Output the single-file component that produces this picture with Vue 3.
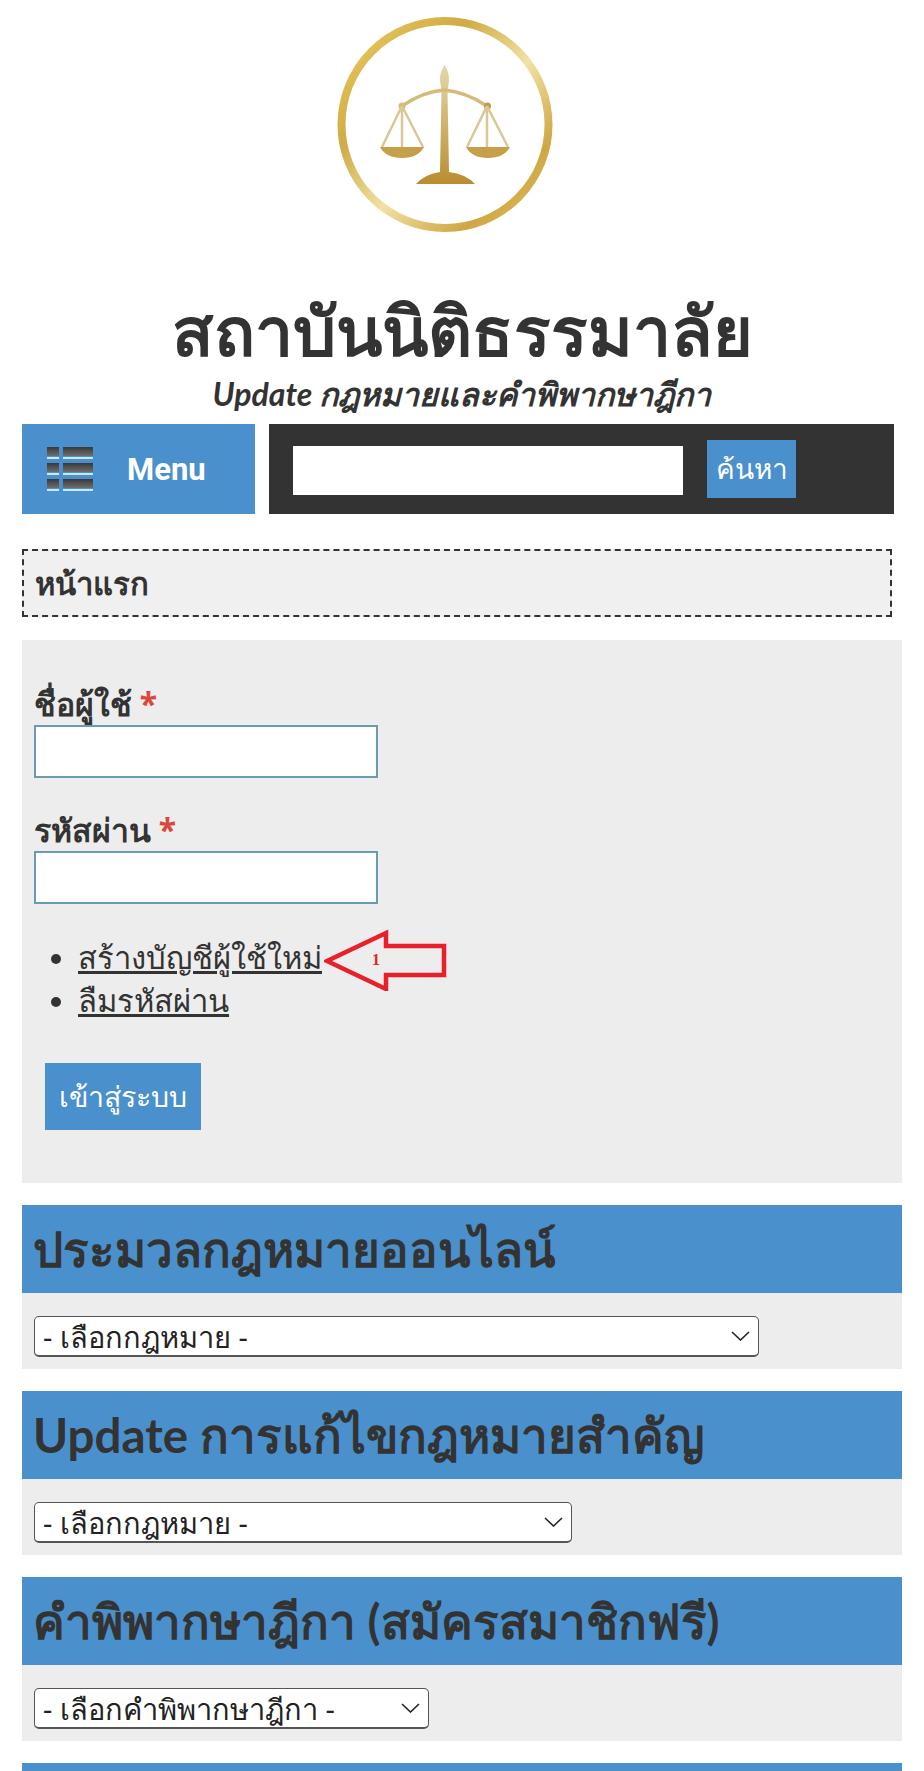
<template>
  <div class="page">
    <header class="site-head">
      <svg class="logo" width="300" height="250" viewBox="0 0 300 250" xmlns="http://www.w3.org/2000/svg">
        <defs>
          <linearGradient id="ring" x1="0" y1="0" x2="1" y2="1">
            <stop offset="0" stop-color="#ecd063" />
            <stop offset="0.3" stop-color="#d0aa45" />
            <stop offset="0.55" stop-color="#f0e2a4" />
            <stop offset="0.8" stop-color="#cfa744" />
            <stop offset="1" stop-color="#e0c263" />
          </linearGradient>
          <linearGradient id="gold" x1="0" y1="0" x2="0" y2="1">
            <stop offset="0" stop-color="#e6d8aa" />
            <stop offset="1" stop-color="#b98d30" />
          </linearGradient>
          <filter id="soft"><feGaussianBlur stdDeviation="0.6" /></filter>
        </defs>
        <g filter="url(#soft)">
          <circle cx="145" cy="124.500" r="103.500" fill="none" stroke="url(#ring)" stroke-width="8" />
          <path d="M144.500 65 Q149 71 149 80 L147.500 92 L149 172 Q166 174 175 184 H116 Q125 174 140 172 L141.500 92 L140 80 Q140 71 144.500 65 Z" fill="url(#gold)" />
          <path d="M102 106 Q122 92 144 90 Q166 92 187 106" fill="none" stroke="#d4bb7a" stroke-width="3.500" />
          <circle cx="102" cy="106" r="3.500" fill="#d4bb7a" />
          <circle cx="187.500" cy="106" r="3.500" fill="#c39d45" />
          <path d="M102 106 L82 147 M102 106 L123 147 M102 106 V147 M187 106 L167 147 M187 106 L208 147 M187 106 V147" fill="none" stroke="#d9c795" stroke-width="2.500" />
          <path d="M80 147 H124 Q118 158 102 158 Q86 158 80 147 Z M166 147 H210 Q204 158 188 158 Q172 158 166 147 Z" fill="#c6a04a" />
        </g>
      </svg>
      <h1 class="site-name">สถาบันนิติธรรมาลัย</h1>
      <p class="slogan">Update กฎหมายและคำพิพากษาฎีกา</p>
    </header>

    <div class="toolbar">
      <div class="menu-btn">
        <svg width="46" height="44" viewBox="0 0 46 44" xmlns="http://www.w3.org/2000/svg">
          <defs>
            <linearGradient id="bar" x1="0" y1="0" x2="0" y2="1">
              <stop offset="0" stop-color="#383838" />
              <stop offset="1" stop-color="#6e6e6e" />
            </linearGradient>
          </defs>
          <g v-for="y in [0, 16, 32]" :key="y">
            <rect x="0" :y="y" width="12" height="9" fill="url(#bar)" />
            <rect x="16" :y="y" width="30" height="9" fill="url(#bar)" />
            <rect x="0" :y="y + 10" width="12" height="2" fill="#cfe6f7" />
            <rect x="16" :y="y + 10" width="30" height="2" fill="#cfe6f7" />
          </g>
        </svg>
        <span class="menu-label">Menu</span>
      </div>
      <div class="search-box">
        <input class="search-input" type="text" />
        <button class="search-btn" type="button">ค้นหา</button>
      </div>
    </div>

    <div class="breadcrumb">หน้าแรก</div>

    <form class="login" @submit.prevent>
      <label class="field">
        <span class="field-label">ชื่อผู้ใช้ <em>*</em></span>
        <input class="field-input" type="text" />
      </label>
      <label class="field">
        <span class="field-label">รหัสผ่าน <em>*</em></span>
        <input class="field-input" type="password" />
      </label>
      <ul class="links">
        <li>
          <a href="#">สร้างบัญชีผู้ใช้ใหม่</a>
          <svg class="arrow" width="126" height="62" viewBox="0 0 126 62" xmlns="http://www.w3.org/2000/svg">
            <path d="M3 32 L62 4 V17 H120 V46 H62 V60 Z" fill="none" stroke="#e8202c" stroke-width="4.500" />
            <text x="48" y="36" class="arrow-num">1</text>
          </svg>
        </li>
        <li><a href="#">ลืมรหัสผ่าน</a></li>
      </ul>
      <button class="submit" type="button">เข้าสู่ระบบ</button>
    </form>

    <section v-for="block in blocks" :key="block.id" class="block">
      <h2 class="block-title">{{ block.title }}</h2>
      <div class="block-body">
        <div class="select-wrap" :style="{ width: block.width + 'px' }">
          <select class="block-select">
            <option>{{ block.option }}</option>
          </select>
          <svg class="chevron" width="19" height="10" viewBox="0 0 19 10" xmlns="http://www.w3.org/2000/svg">
            <path d="M1 1 L9.500 9 L18 1" fill="none" stroke="#222" stroke-width="1.600" />
          </svg>
        </div>
      </div>
    </section>
  </div>
</template>

<script setup>
const blocks = [
  { id: 1, title: 'ประมวลกฎหมายออนไลน์', option: '- เลือกกฎหมาย -', width: 725 },
  { id: 2, title: 'Update การแก้ไขกฎหมายสำคัญ', option: '- เลือกกฎหมาย -', width: 538 },
  { id: 3, title: 'คำพิพากษาฎีกา (สมัครสมาชิกฟรี)', option: '- เลือกคำพิพากษาฎีกา -', width: 395 },
  // บล็อกสุดท้ายโผล่มาแค่ขอบบน
  { id: 4, title: '', option: '', width: 395 }
]
</script>

<style>
html,
body {
  background: #fff;
  overflow: hidden;
}
</style>

<style scoped>
.page {
  height: 1771px;
  overflow: hidden;
  padding: 0 22px;
  box-sizing: border-box;
  font-family: Lato, "Noto Sans", "Liberation Sans", sans-serif;
  color: #333;
}

.site-head {
  display: flex;
  flex-direction: column;
  align-items: center;
}

.logo {
  display: block;
  margin-right: 24px;
}

.site-name {
  margin: 40px 0 0;
  height: 80px;
  line-height: 80px;
  font-size: 68px;
  font-weight: 700;
  color: #333;
}

.slogan {
  margin: 0;
  height: 54px;
  line-height: 48px;
  font-size: 32px;
  font-weight: 700;
  font-style: italic;
}

.toolbar {
  display: flex;
  gap: 14px;
  height: 90px;
  margin-right: 8px;
}

.menu-btn {
  width: 233px;
  background: #4a90cc;
  display: flex;
  align-items: center;
  padding-left: 25px;
  gap: 34px;
  box-sizing: border-box;
}

.menu-label {
  font-family: Roboto, sans-serif;
  font-size: 31px;
  font-weight: 700;
  color: #fff;
}

.search-box {
  flex: 1;
  background: #333;
  display: flex;
  align-items: center;
  padding-left: 24px;
  gap: 24px;
}

.search-input {
  width: 390px;
  height: 49px;
  margin-top: 3px;
  border: 0;
  padding: 0;
  background: #fff;
}

.search-btn {
  width: 89px;
  height: 58px;
  border: 0;
  padding: 0;
  background: #4a90cc;
  color: #fff;
  font: 400 28px "Noto Sans", sans-serif;
}

.breadcrumb {
  margin: 35px 10px 0 0;
  height: 68px;
  line-height: 64px;
  padding-left: 11px;
  box-sizing: border-box;
  border: 2px dashed #333;
  background: #f0f0f0;
  font-size: 31px;
  font-weight: 700;
}

.login {
  margin-top: 23px;
  height: 543px;
  background: #ededed;
  padding: 40px 12px 0;
  box-sizing: border-box;
}

.field {
  display: block;
  margin-bottom: 28px;
}

.field-label {
  display: block;
  height: 45px;
  line-height: 47px;
  font-size: 32px;
  font-weight: 700;
}

.field-label em {
  font-family: "Noto Sans", sans-serif;
  font-style: normal;
  color: #d9483a;
}

.field-input {
  display: block;
  width: 344px;
  height: 53px;
  box-sizing: border-box;
  border: 2px solid #6a9ab4;
  background: #fff;
}

.links {
  margin: 0;
  padding: 4px 0 0 44px;
  font-size: 31px;
  line-height: 43px;
}

.links li {
  position: relative;
}

.links a {
  color: #333;
}

.arrow {
  position: absolute;
  left: 246px;
  top: -7px;
}

.arrow-num {
  font: 700 16px "Liberation Serif", serif;
  fill: #e8202c;
}

.submit {
  display: block;
  margin: 41px 0 0 11px;
  width: 156px;
  height: 67px;
  border: 0;
  padding: 0;
  background: #4a90cc;
  color: #fff;
  font: 400 28.500px "Noto Sans", sans-serif;
}

.block {
  margin-top: 22px;
}

.block-title {
  margin: 0;
  height: 88px;
  line-height: 88px;
  padding-left: 11px;
  background: #4a90cc;
  font-size: 47.500px;
  font-weight: 700;
  color: #333;
  white-space: nowrap;
}

.block-body {
  height: 76px;
  padding: 23px 12px 0;
  box-sizing: border-box;
  background: #ededed;
}

.select-wrap {
  position: relative;
  height: 41px;
}

.block-select {
  display: block;
  width: 100%;
  height: 41px;
  padding: 0 8px;
  box-sizing: border-box;
  appearance: none;
  border: 1px solid #555;
  border-bottom-width: 2px;
  border-radius: 5px;
  background: #fff;
  font: 400 29px "Noto Sans", sans-serif;
  color: #222;
}

.chevron {
  position: absolute;
  right: 9px;
  top: 15px;
  pointer-events: none;
}
</style>
